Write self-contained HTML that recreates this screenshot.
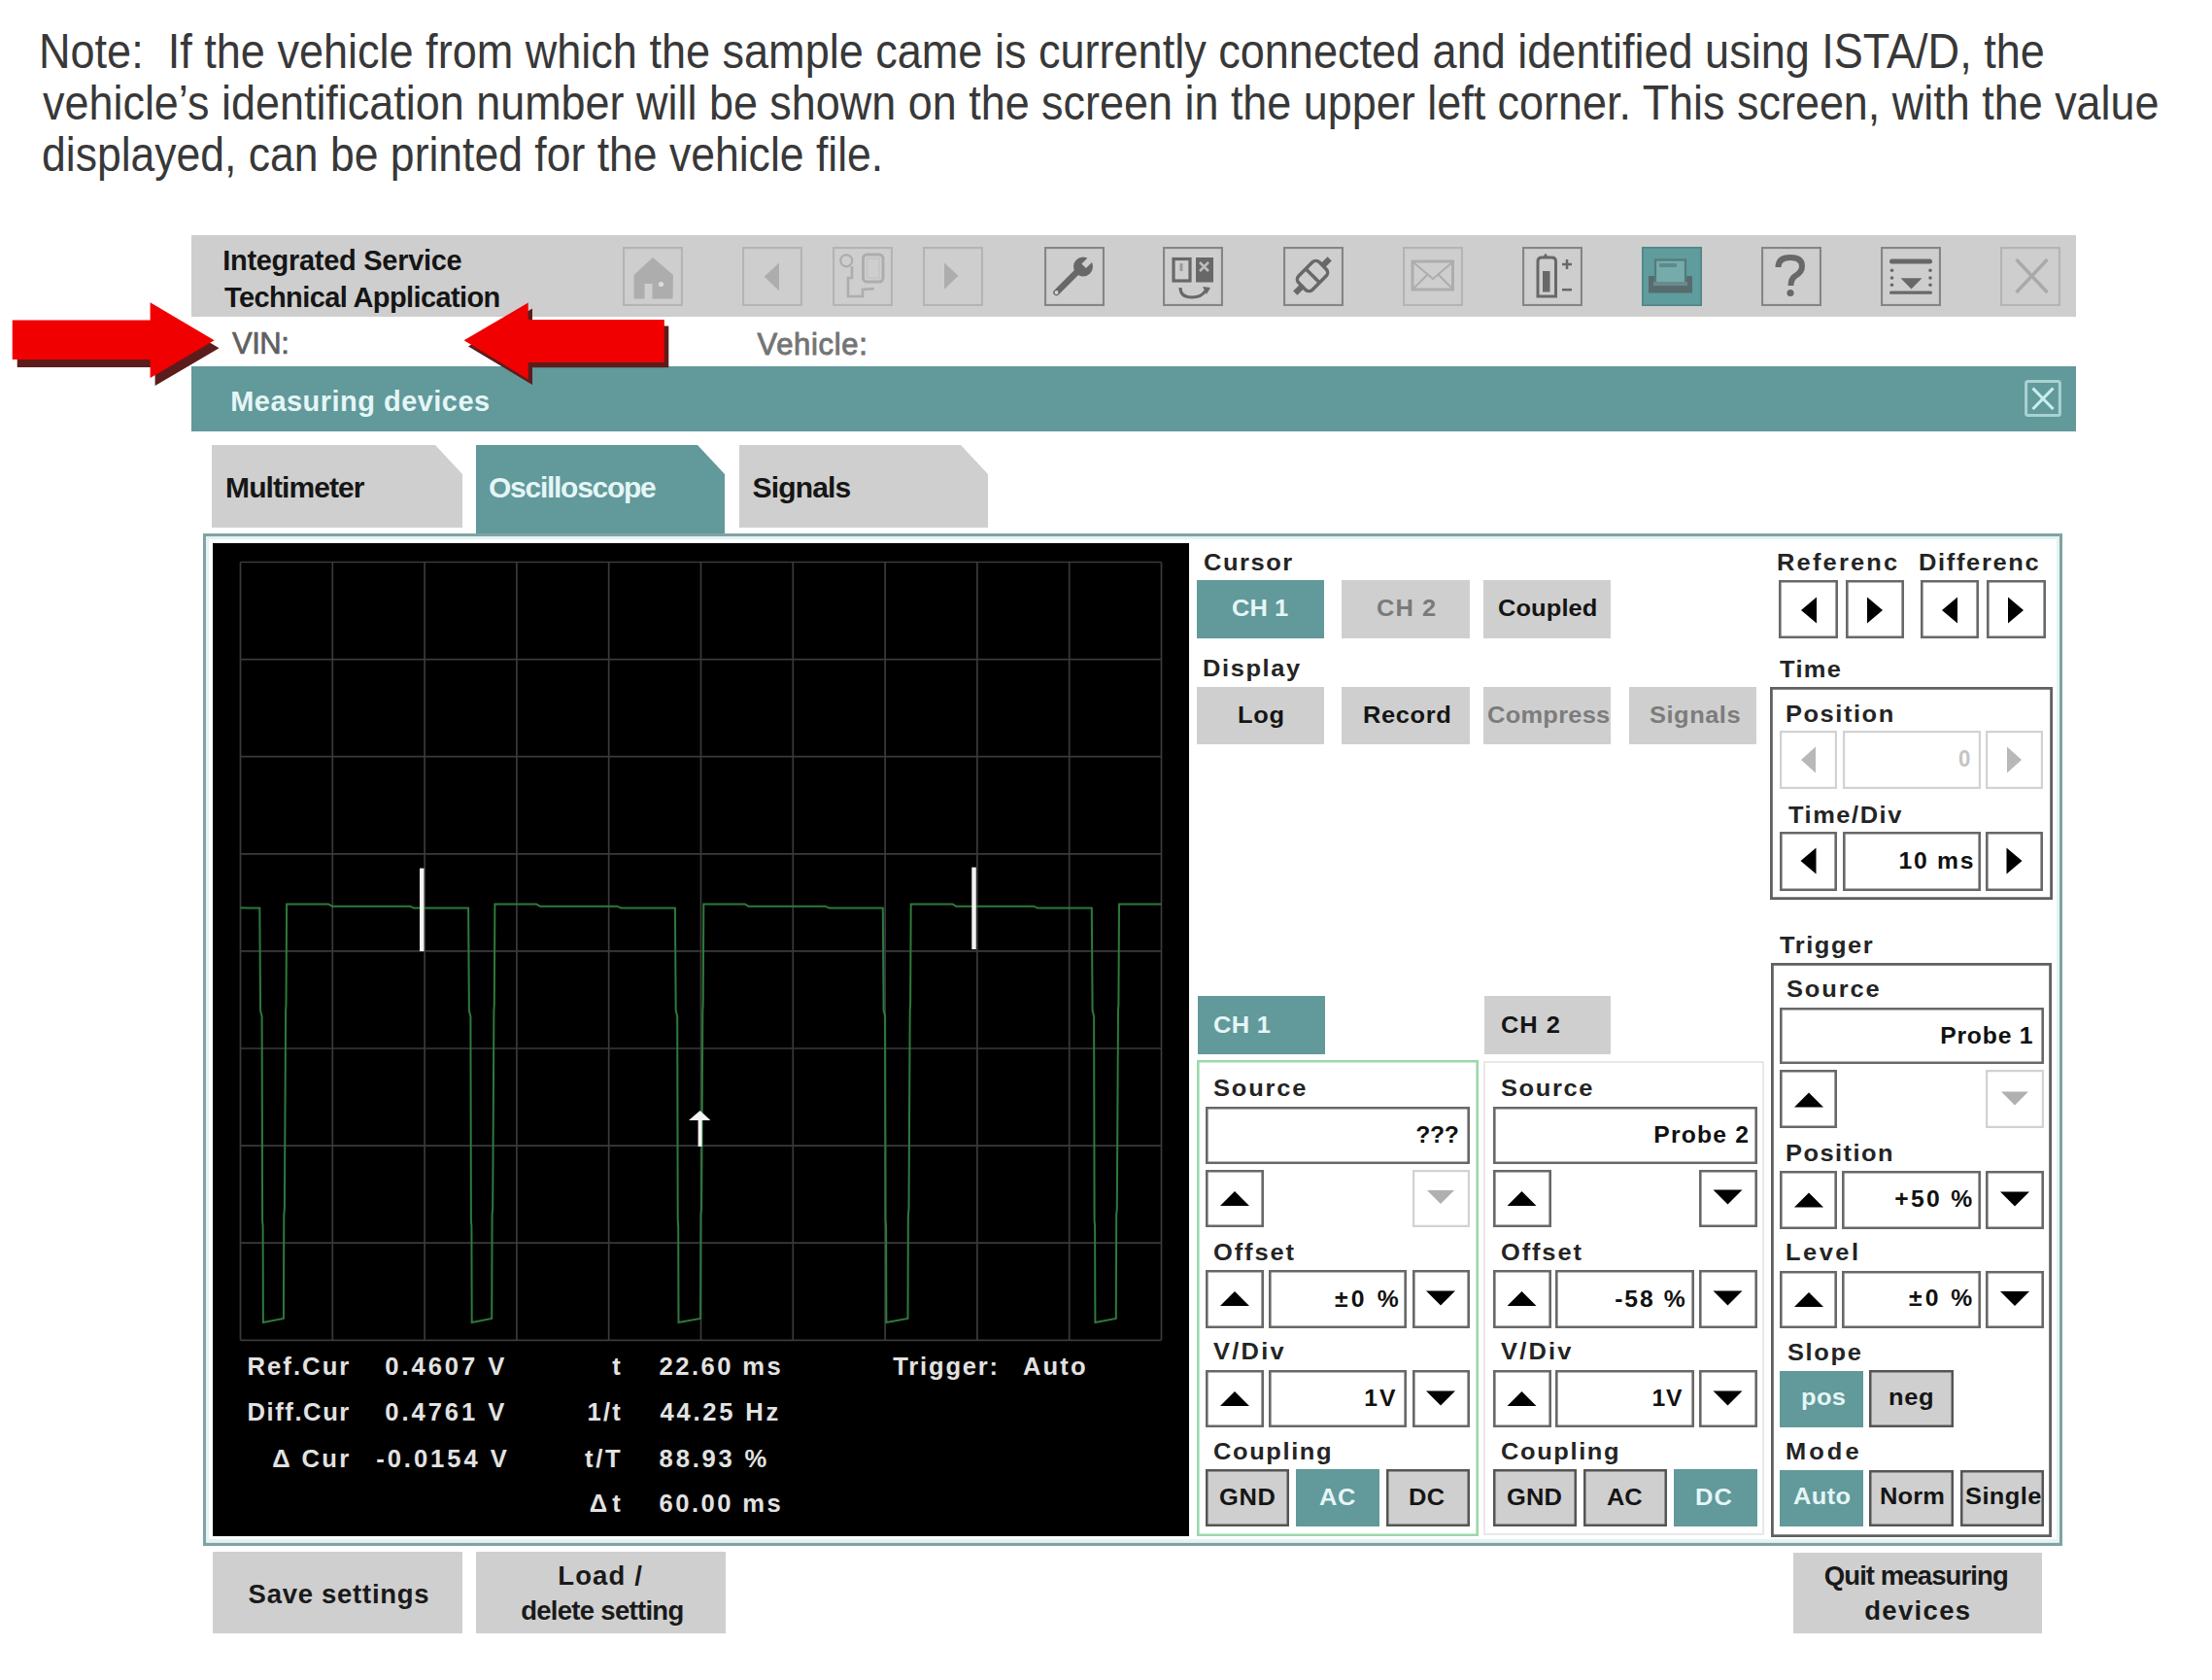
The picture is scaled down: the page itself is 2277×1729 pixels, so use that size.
<!DOCTYPE html>
<html><head><meta charset="utf-8"><title>Measuring devices</title>
<style>
html,body{margin:0;padding:0;background:#fff;}
#r{position:relative;width:2277px;height:1729px;overflow:hidden;background:#fff;font-family:"Liberation Sans",sans-serif;}
.a{position:absolute;}
.t{position:absolute;white-space:pre;font-family:"Liberation Sans",sans-serif;}
</style></head><body><div id="r">
<div class="t" style="left:40.48px;top:27.55px;font-size:49.20px;line-height:49.20px;font-weight:normal;color:#383838;transform:scaleX(0.9158);transform-origin:0 0;">Note:  If the vehicle from which the sample came is currently connected and identified using ISTA/D, the</div>
<div class="t" style="left:44.00px;top:80.55px;font-size:49.20px;line-height:49.20px;font-weight:normal;color:#383838;transform:scaleX(0.9134);transform-origin:0 0;">vehicle’s identification number will be shown on the screen in the upper left corner. This screen, with the value</div>
<div class="t" style="left:42.61px;top:133.55px;font-size:49.20px;line-height:49.20px;font-weight:normal;color:#383838;transform:scaleX(0.9051);transform-origin:0 0;">displayed, can be printed for the vehicle file.</div>
<div class="a" style="left:197.0px;top:242.0px;width:1940.0px;height:84.0px;background:#cecece;"></div>
<div class="t" style="left:229.19px;top:254.45px;font-size:29.00px;line-height:29.00px;font-weight:bold;color:#151515;letter-spacing:-0.289px;">Integrated Service</div>
<div class="t" style="left:231.00px;top:292.45px;font-size:29.00px;line-height:29.00px;font-weight:bold;color:#151515;letter-spacing:-0.608px;">Technical Application</div>
<svg class="a" style="left:641.0px;top:253.5px;" width="62" height="61" viewBox="0 0 62 61"><rect x="1" y="1" width="60" height="59" fill="none" stroke="#b4b4b4" stroke-width="2.2"/><path d="M31 11 L52 29 L51.5 53.5 L11.5 53.5 L11.5 29 Z" fill="#adadad"/><rect x="22.5" y="38" width="8" height="16" fill="#cecece"/><circle cx="39.5" cy="38.5" r="2.6" fill="#dcdcdc"/></svg>
<svg class="a" style="left:764.0px;top:253.5px;" width="62" height="61" viewBox="0 0 62 61"><rect x="1" y="1" width="60" height="59" fill="none" stroke="#b4b4b4" stroke-width="2.2"/><path d="M22.6 30.8 L38 16.4 L38 45.3 Z" fill="#adadad"/></svg>
<svg class="a" style="left:857.0px;top:253.5px;" width="62" height="61" viewBox="0 0 62 61"><rect x="1" y="1" width="60" height="59" fill="none" stroke="#b4b4b4" stroke-width="2.2"/><circle cx="14.2" cy="14.3" r="6" fill="none" stroke="#adadad" stroke-width="2.2"/><rect x="31.5" y="8" width="20.5" height="28" rx="4" fill="none" stroke="#adadad" stroke-width="3"/><rect x="35.5" y="12" width="12.5" height="20" fill="none" stroke="#c4c4c4" stroke-width="1.5"/><path d="M20 20 L20 32 L16 32 L16 51 L31 51 L31 44 L43 43" fill="none" stroke="#adadad" stroke-width="2.6"/></svg>
<svg class="a" style="left:950.0px;top:253.5px;" width="62" height="61" viewBox="0 0 62 61"><rect x="1" y="1" width="60" height="59" fill="none" stroke="#b4b4b4" stroke-width="2.2"/><path d="M22 16.6 L36.5 29.7 L22 43.7 Z" fill="#adadad"/></svg>
<svg class="a" style="left:1075.0px;top:253.5px;" width="62" height="61" viewBox="0 0 62 61"><rect x="1" y="1" width="60" height="59" fill="none" stroke="#858585" stroke-width="2.2"/><path d="M12.5 47 L35 24.5" stroke="#686868" stroke-width="6.5" stroke-linecap="round"/><circle cx="40" cy="20.5" r="10" fill="#686868"/><path d="M42.96 22.06 L38.44 17.54 L47.64 8.34 L52.16 12.86 Z" fill="#cecece"/><circle cx="12.5" cy="47" r="1.9" fill="#d6d6d6"/></svg>
<svg class="a" style="left:1197.0px;top:253.5px;" width="62" height="61" viewBox="0 0 62 61"><rect x="1" y="1" width="60" height="59" fill="none" stroke="#858585" stroke-width="2.2"/><rect x="11" y="12.5" width="17" height="22.5" fill="none" stroke="#686868" stroke-width="3.2"/><rect x="17.5" y="17" width="3" height="8" fill="#9a9a9a"/><rect x="34" y="11" width="18" height="25.5" fill="#686868"/><path d="M38 16 L47 25 M47 16 L38 25" stroke="#bdbdbd" stroke-width="2.5"/><path d="M18 42 Q18 52 30 52 Q40 52 44 45" fill="none" stroke="#686868" stroke-width="3"/><path d="M41 41 L49 42 L45 49 Z" fill="#686868"/></svg>
<svg class="a" style="left:1321.0px;top:253.5px;" width="62" height="61" viewBox="0 0 62 61"><rect x="1" y="1" width="60" height="59" fill="none" stroke="#858585" stroke-width="2.2"/><g transform="rotate(-45 30 30)"><rect x="15" y="20" width="30" height="20" rx="5" fill="none" stroke="#686868" stroke-width="3.5"/><rect x="28.5" y="19" width="3.5" height="22" fill="#686868"/><rect x="5" y="27" width="10" height="6" fill="#686868"/><rect x="45" y="27" width="10" height="6" fill="#686868"/></g></svg>
<svg class="a" style="left:1444.0px;top:253.5px;" width="62" height="61" viewBox="0 0 62 61"><rect x="1" y="1" width="60" height="59" fill="none" stroke="#b4b4b4" stroke-width="2.2"/><rect x="10" y="15" width="41.5" height="29" fill="none" stroke="#adadad" stroke-width="3"/><path d="M11 16 L31 33 L51 16 M11 43 L25 29 M51 43 L37 29" fill="none" stroke="#adadad" stroke-width="2"/></svg>
<svg class="a" style="left:1567.0px;top:253.5px;" width="62" height="61" viewBox="0 0 62 61"><rect x="1" y="1" width="60" height="59" fill="none" stroke="#858585" stroke-width="2.2"/><path d="M16 51 L16 15 Q16 11 20 11 L30.5 11 Q34.5 11 34.5 15 L34.5 51 Z" fill="none" stroke="#686868" stroke-width="3"/><path d="M21 11 L24 6.5 L27 11 Z" fill="#686868"/><rect x="21" y="25" width="7.5" height="21.5" fill="#686868"/><path d="M41 18 L51 18 M46 13 L46 23" stroke="#686868" stroke-width="2.5"/><path d="M41 44.2 L51 44.2" stroke="#686868" stroke-width="2.5"/></svg>
<svg class="a" style="left:1690px;top:253.5px" width="62" height="61" viewBox="0 0 62 61"><rect x="0" y="0" width="62" height="61" fill="#5f9c9d"/><rect x="0.8" y="0.8" width="60.4" height="59.4" fill="none" stroke="#4f8586" stroke-width="1.6"/><rect x="7" y="30" width="45" height="17.5" fill="#566c6e"/><rect x="14" y="13.5" width="31" height="25" fill="#76abab" stroke="#56797a" stroke-width="2.2"/><rect x="18" y="17" width="18" height="4" fill="#5a8c8c"/><rect x="12" y="36" width="35" height="4" fill="#6c8a8b"/></svg>
<svg class="a" style="left:1813.0px;top:253.5px;" width="62" height="61" viewBox="0 0 62 61"><rect x="1" y="1" width="60" height="59" fill="none" stroke="#858585" stroke-width="2.2"/><path d="M17.5 21 Q17.5 11 30 11 Q42 11 42 20 Q42 26 35 30 Q30.5 33 30.5 40" fill="none" stroke="#686868" stroke-width="6"/><circle cx="30" cy="47.5" r="3.6" fill="#686868"/></svg>
<svg class="a" style="left:1936.0px;top:253.5px;" width="62" height="61" viewBox="0 0 62 61"><rect x="1" y="1" width="60" height="59" fill="none" stroke="#858585" stroke-width="2.2"/><rect x="9" y="12.5" width="44" height="5" rx="2.5" fill="#686868"/><rect x="9" y="45.5" width="44" height="3.2" rx="1.5" fill="#686868"/><circle cx="11.5" cy="24.3" r="1.8" fill="#686868"/><circle cx="11.5" cy="32" r="1.8" fill="#686868"/><circle cx="11.5" cy="39.2" r="1.8" fill="#686868"/><circle cx="51" cy="24.3" r="1.8" fill="#686868"/><circle cx="51" cy="32" r="1.8" fill="#686868"/><circle cx="51" cy="39.2" r="1.8" fill="#686868"/><path d="M20.5 32.3 L42.5 32.3 L31.5 43.5 Z" fill="#686868"/></svg>
<svg class="a" style="left:2059.0px;top:253.5px;" width="62" height="61" viewBox="0 0 62 61"><rect x="1" y="1" width="60" height="59" fill="none" stroke="#b4b4b4" stroke-width="2.2"/><path d="M16.5 13 L48.5 47 M48.5 13 L16.5 47" stroke="#a9a9a9" stroke-width="3.4"/></svg>
<div class="t" style="left:239.00px;top:338.26px;font-size:31.00px;line-height:31.00px;font-weight:normal;color:#606060;letter-spacing:-0.496px;-webkit-text-stroke:0.7px #606060;">VIN:</div>
<div class="t" style="left:779.50px;top:338.76px;font-size:31.00px;line-height:31.00px;font-weight:normal;color:#747474;letter-spacing:0.675px;-webkit-text-stroke:0.9px #747474;">Vehicle:</div>
<div class="a" style="left:197.0px;top:377.0px;width:1940.0px;height:67.0px;background:#62999a;"></div>
<div class="t" style="left:237.19px;top:398.95px;font-size:29.00px;line-height:29.00px;font-weight:bold;color:#e4f6f6;letter-spacing:0.468px;">Measuring devices</div>
<svg class="a" style="left:2084px;top:390.5px" width="38" height="38" viewBox="0 0 38 38"><rect x="1.6" y="1.6" width="34.8" height="34.8" rx="2" fill="none" stroke="#a9d2d2" stroke-width="3"/><path d="M8.5 8.5 L29.5 30 M29.5 8.5 L8.5 30" stroke="#c9eeee" stroke-width="3.2"/></svg>
<svg class="a" style="left:0;top:290px" width="700" height="120" viewBox="0 290 700 120"><path d="M17.7 337.4 L159.6 337.4 L159.6 319.3 L225.6 358.2 L159.6 397 L159.6 378.1 L17.7 378.1 Z" fill="#5c1c1c"/><path d="M12.7 329.4 L154.6 329.4 L154.6 311.3 L220.6 350.2 L154.6 389 L154.6 370.1 L12.7 370.1 Z" fill="#f00000"/><path d="M482 356.5 L548 317.5 L548 335.5 L688.3 335.5 L688.3 378.3 L548 378.3 L548 396 Z" fill="#5c1c1c"/><path d="M477.6 350.3 L543.7 311.4 L543.7 329.1 L683.8 329.1 L683.8 372.9 L543.7 372.9 L543.7 390.5 Z" fill="#f00000"/></svg>
<svg class="a" style="left:218px;top:458px" width="258" height="85" viewBox="0 0 258 85"><path d="M0 0 L230 0 L258 30 L258 85 L0 85 Z" fill="#cfcfcf"/></svg>
<svg class="a" style="left:490px;top:458px" width="256" height="93" viewBox="0 0 256 93"><path d="M0 0 L228 0 L256 30 L256 93 L0 93 Z" fill="#62999a"/></svg>
<svg class="a" style="left:761px;top:458px" width="256" height="85" viewBox="0 0 256 85"><path d="M0 0 L228 0 L256 30 L256 85 L0 85 Z" fill="#cfcfcf"/></svg>
<div class="t" style="left:232.12px;top:487.11px;font-size:30.00px;line-height:30.00px;font-weight:bold;color:#161616;letter-spacing:-0.932px;">Multimeter</div>
<div class="t" style="left:503.06px;top:487.11px;font-size:30.00px;line-height:30.00px;font-weight:bold;color:#e4f6f6;letter-spacing:-1.278px;">Oscilloscope</div>
<div class="t" style="left:774.53px;top:487.11px;font-size:30.00px;line-height:30.00px;font-weight:bold;color:#161616;letter-spacing:-0.836px;">Signals</div>
<div class="a" style="left:209.0px;top:549.0px;width:1914.0px;height:1041.5px;box-shadow:inset 0 0 0 3.2px #80a3a3;"></div>
<div class="a" style="left:212.2px;top:552.2px;width:1907.6px;height:1035.1px;box-shadow:inset 0 0 0 3px #e4f3f3;"></div>
<div class="a" style="left:218.5px;top:559.0px;width:1005.5px;height:1022.0px;background:#000;"></div>
<svg class="a" style="left:0.0px;top:0.0px;" width="1240" height="1600" viewBox="0 0 1240 1600"><g stroke="#3a3a3a" stroke-width="1.7" fill="none"><path d="M247.5 578.5 L247.5 1379.3"/><path d="M342.3 578.5 L342.3 1379.3"/><path d="M437.1 578.5 L437.1 1379.3"/><path d="M531.9 578.5 L531.9 1379.3"/><path d="M626.7 578.5 L626.7 1379.3"/><path d="M721.5 578.5 L721.5 1379.3"/><path d="M816.3 578.5 L816.3 1379.3"/><path d="M911.1 578.5 L911.1 1379.3"/><path d="M1005.9 578.5 L1005.9 1379.3"/><path d="M1100.7 578.5 L1100.7 1379.3"/><path d="M1195.5 578.5 L1195.5 1379.3"/><path d="M247.5 578.5 L1195.5 578.5"/><path d="M247.5 678.6 L1195.5 678.6"/><path d="M247.5 778.7 L1195.5 778.7"/><path d="M247.5 878.8 L1195.5 878.8"/><path d="M247.5 978.9 L1195.5 978.9"/><path d="M247.5 1079.0 L1195.5 1079.0"/><path d="M247.5 1179.1 L1195.5 1179.1"/><path d="M247.5 1279.2 L1195.5 1279.2"/><path d="M247.5 1379.3 L1195.5 1379.3"/></g><polyline points="247.5,934.3 267.3,934.6 268.1,1040.0 269.6,1046.0 270.1,1256.0 270.6,1262.0 270.9,1361.0 291.9,1357.0 292.3,1250.0 292.9,1244.0 294.1,1040.0 294.5,1034.0 295.1,930.5 338.1,930.5 341.9,932.7 422.3,932.7 426.0,934.6 482.1,934.6 482.9,1040.0 484.4,1046.0 484.9,1256.0 485.4,1262.0 485.7,1361.0 506.2,1357.0 506.6,1250.0 507.2,1244.0 508.4,1040.0 508.8,1034.0 509.4,930.5 552.1,930.5 555.8,932.7 635.5,932.7 639.2,934.6 694.9,934.6 695.7,1040.0 697.2,1046.0 697.7,1256.0 698.2,1262.0 698.5,1361.0 721.1,1357.0 721.5,1250.0 722.1,1244.0 723.3,1040.0 723.7,1034.0 724.3,930.5 766.7,930.5 770.4,932.7 849.8,932.7 853.4,934.6 908.8,934.6 909.6,1040.0 911.1,1046.0 911.6,1256.0 912.1,1262.0 912.4,1361.0 934.5,1357.0 934.9,1250.0 935.5,1244.0 936.7,1040.0 937.1,1034.0 937.7,930.5 980.5,930.5 984.2,932.7 1064.2,932.7 1068.0,934.6 1123.8,934.6 1124.6,1040.0 1126.1,1046.0 1126.6,1256.0 1127.1,1262.0 1127.4,1361.0 1148.8,1357.0 1149.2,1250.0 1149.8,1244.0 1151.0,1040.0 1151.4,1034.0 1152.0,930.5 1195.5,930.5" fill="none" stroke="#2d7a3a" stroke-width="2.0"/><rect x="432" y="893.6" width="4.5" height="85.4" fill="#f2f2f2"/><rect x="1000.3" y="892.6" width="4.5" height="84.4" fill="#f2f2f2"/><path d="M709 1153 L720.6 1143 L731.4 1153 Z" fill="#f4f4f4"/><rect x="718.6" y="1150" width="4" height="30" fill="#f4f4f4"/></svg>
<div class="t" style="left:254.40px;top:1393.73px;font-size:25.60px;line-height:25.60px;font-weight:bold;color:#e2e2e2;letter-spacing:2.085px;">Ref.Cur</div>
<div class="t" style="left:396.20px;top:1393.73px;font-size:25.60px;line-height:25.60px;font-weight:bold;color:#e2e2e2;letter-spacing:2.955px;">0.4607 V</div>
<div class="t" style="left:254.40px;top:1441.23px;font-size:25.60px;line-height:25.60px;font-weight:bold;color:#e2e2e2;letter-spacing:1.587px;">Diff.Cur</div>
<div class="t" style="left:396.20px;top:1441.23px;font-size:25.60px;line-height:25.60px;font-weight:bold;color:#e2e2e2;letter-spacing:2.955px;">0.4761 V</div>
<div class="t" style="left:280.20px;top:1488.63px;font-size:25.60px;line-height:25.60px;font-weight:bold;color:#e2e2e2;letter-spacing:2.391px;">Δ Cur</div>
<div class="t" style="left:387.20px;top:1488.63px;font-size:25.60px;line-height:25.60px;font-weight:bold;color:#e2e2e2;letter-spacing:2.958px;">-0.0154 V</div>
<div class="t" style="left:630.30px;top:1393.73px;font-size:25.60px;line-height:25.60px;font-weight:bold;color:#e2e2e2;">t</div>
<div class="t" style="left:604.40px;top:1441.23px;font-size:25.60px;line-height:25.60px;font-weight:bold;color:#e2e2e2;letter-spacing:2.275px;">1/t</div>
<div class="t" style="left:602.00px;top:1488.63px;font-size:25.60px;line-height:25.60px;font-weight:bold;color:#e2e2e2;letter-spacing:2.731px;">t/T</div>
<div class="t" style="left:606.70px;top:1534.73px;font-size:25.60px;line-height:25.60px;font-weight:bold;color:#e2e2e2;letter-spacing:5.200px;">Δt</div>
<div class="t" style="left:678.60px;top:1393.73px;font-size:25.60px;line-height:25.60px;font-weight:bold;color:#e2e2e2;letter-spacing:2.437px;">22.60 ms</div>
<div class="t" style="left:679.40px;top:1441.23px;font-size:25.60px;line-height:25.60px;font-weight:bold;color:#e2e2e2;letter-spacing:2.777px;">44.25 Hz</div>
<div class="t" style="left:678.60px;top:1488.63px;font-size:25.60px;line-height:25.60px;font-weight:bold;color:#e2e2e2;letter-spacing:2.804px;">88.93 %</div>
<div class="t" style="left:678.60px;top:1534.73px;font-size:25.60px;line-height:25.60px;font-weight:bold;color:#e2e2e2;letter-spacing:2.437px;">60.00 ms</div>
<div class="t" style="left:919.30px;top:1393.73px;font-size:25.60px;line-height:25.60px;font-weight:bold;color:#e2e2e2;letter-spacing:1.789px;">Trigger:</div>
<div class="t" style="left:1052.90px;top:1393.73px;font-size:25.60px;line-height:25.60px;font-weight:bold;color:#e2e2e2;letter-spacing:2.150px;">Auto</div>
<div class="t" style="left:1239.20px;top:567.09px;font-size:24.70px;line-height:24.70px;font-weight:bold;color:#242424;letter-spacing:1.505px;transform:scaleX(1.0300);transform-origin:0 0;">Cursor</div>
<div class="a" style="left:1232.0px;top:597.0px;width:131.0px;height:60.0px;background:#62999a;"></div>
<div class="t" style="left:1268.20px;top:614.09px;font-size:24.70px;line-height:24.70px;font-weight:bold;color:#e4f6f6;letter-spacing:0.086px;transform:scaleX(1.0300);transform-origin:0 0;">CH 1</div>
<div class="a" style="left:1381.0px;top:597.0px;width:132.0px;height:60.0px;background:#cfcfcf;"></div>
<div class="t" style="left:1417.20px;top:614.09px;font-size:24.70px;line-height:24.70px;font-weight:bold;color:#7a7a7a;letter-spacing:1.025px;transform:scaleX(1.0300);transform-origin:0 0;">CH 2</div>
<div class="a" style="left:1527.0px;top:597.0px;width:131.0px;height:60.0px;background:#cfcfcf;"></div>
<div class="t" style="left:1542.20px;top:614.09px;font-size:24.70px;line-height:24.70px;font-weight:bold;color:#151515;letter-spacing:0.109px;transform:scaleX(1.0300);transform-origin:0 0;">Coupled</div>
<div class="t" style="left:1238.41px;top:676.39px;font-size:24.70px;line-height:24.70px;font-weight:bold;color:#242424;letter-spacing:1.559px;transform:scaleX(1.0300);transform-origin:0 0;">Display</div>
<div class="a" style="left:1232.0px;top:707.0px;width:131.0px;height:59.0px;background:#cfcfcf;"></div>
<div class="t" style="left:1274.01px;top:724.09px;font-size:24.70px;line-height:24.70px;font-weight:bold;color:#151515;letter-spacing:0.678px;transform:scaleX(1.0300);transform-origin:0 0;">Log</div>
<div class="a" style="left:1381.0px;top:707.0px;width:132.0px;height:59.0px;background:#cfcfcf;"></div>
<div class="t" style="left:1402.91px;top:724.09px;font-size:24.70px;line-height:24.70px;font-weight:bold;color:#151515;letter-spacing:0.595px;transform:scaleX(1.0300);transform-origin:0 0;">Record</div>
<div class="a" style="left:1527.0px;top:707.0px;width:131.0px;height:59.0px;background:#cfcfcf;"></div>
<div class="t" style="left:1530.70px;top:724.09px;font-size:24.70px;line-height:24.70px;font-weight:bold;color:#7c7c7c;letter-spacing:0.264px;transform:scaleX(1.0300);transform-origin:0 0;">Compress</div>
<div class="a" style="left:1677.0px;top:707.0px;width:131.0px;height:59.0px;background:#cfcfcf;"></div>
<div class="t" style="left:1697.90px;top:724.09px;font-size:24.70px;line-height:24.70px;font-weight:bold;color:#7c7c7c;letter-spacing:0.509px;transform:scaleX(1.0300);transform-origin:0 0;">Signals</div>
<div class="t" style="left:1829.41px;top:566.89px;font-size:24.70px;line-height:24.70px;font-weight:bold;color:#242424;letter-spacing:2.128px;transform:scaleX(1.0300);transform-origin:0 0;">Referenc</div>
<div class="t" style="left:1975.41px;top:566.89px;font-size:24.70px;line-height:24.70px;font-weight:bold;color:#242424;letter-spacing:1.632px;transform:scaleX(1.0300);transform-origin:0 0;">Differenc</div>
<div class="a" style="left:1831.0px;top:596.5px;width:61.0px;height:60.5px;background:#fff;box-shadow:inset 0 0 0 2.6px #686868;"></div>
<div class="a" style="left:1900.0px;top:596.5px;width:60.0px;height:60.5px;background:#fff;box-shadow:inset 0 0 0 2.6px #686868;"></div>
<div class="a" style="left:1977.0px;top:596.5px;width:60.0px;height:60.5px;background:#fff;box-shadow:inset 0 0 0 2.6px #686868;"></div>
<div class="a" style="left:2045.0px;top:596.5px;width:61.0px;height:60.5px;background:#fff;box-shadow:inset 0 0 0 2.6px #686868;"></div>
<div class="t" style="left:1832.30px;top:676.79px;font-size:24.70px;line-height:24.70px;font-weight:bold;color:#242424;letter-spacing:1.267px;transform:scaleX(1.0300);transform-origin:0 0;">Time</div>
<div class="a" style="left:1822.0px;top:706.5px;width:291.0px;height:219.5px;background:#fff;box-shadow:inset 0 0 0 2.8px #606060;"></div>
<div class="t" style="left:1838.01px;top:722.79px;font-size:24.70px;line-height:24.70px;font-weight:bold;color:#242424;letter-spacing:1.508px;transform:scaleX(1.0300);transform-origin:0 0;">Position</div>
<div class="a" style="left:1832.0px;top:752.0px;width:59.0px;height:59.5px;background:#fff;box-shadow:inset 0 0 0 2.2px #d2d2d2;"></div>
<div class="a" style="left:1897.0px;top:752.0px;width:142.0px;height:59.5px;background:#fff;box-shadow:inset 0 0 0 2.2px #d2d2d2;"></div>
<div class="a" style="left:2044.0px;top:752.0px;width:59.0px;height:59.5px;background:#fff;box-shadow:inset 0 0 0 2.2px #d2d2d2;"></div>
<div class="t" style="left:2015.54px;top:769.09px;font-size:24.70px;line-height:24.70px;font-weight:bold;color:#c4c4c4;transform:scaleX(0.9000);transform-origin:0 0;">0</div>
<div class="t" style="left:1841.00px;top:826.89px;font-size:24.70px;line-height:24.70px;font-weight:bold;color:#242424;letter-spacing:1.492px;transform:scaleX(1.0300);transform-origin:0 0;">Time/Div</div>
<div class="a" style="left:1832.0px;top:856.0px;width:59.0px;height:60.5px;background:#fff;box-shadow:inset 0 0 0 2.6px #686868;"></div>
<div class="a" style="left:1897.0px;top:856.0px;width:142.0px;height:60.5px;background:#fff;box-shadow:inset 0 0 0 2.6px #686868;"></div>
<div class="a" style="left:2044.0px;top:856.0px;width:59.0px;height:60.5px;background:#fff;box-shadow:inset 0 0 0 2.6px #686868;"></div>
<div class="t" style="left:1954.46px;top:874.09px;font-size:24.70px;line-height:24.70px;font-weight:bold;color:#111;letter-spacing:1.777px;">10 ms</div>
<div class="t" style="left:1832.40px;top:961.09px;font-size:24.70px;line-height:24.70px;font-weight:bold;color:#242424;letter-spacing:1.541px;transform:scaleX(1.0300);transform-origin:0 0;">Trigger</div>
<div class="a" style="left:1823.0px;top:991.0px;width:289.0px;height:590.5px;background:#fff;box-shadow:inset 0 0 0 2.8px #606060;"></div>
<div class="t" style="left:1839.20px;top:1006.09px;font-size:24.70px;line-height:24.70px;font-weight:bold;color:#242424;letter-spacing:1.841px;transform:scaleX(1.0300);transform-origin:0 0;">Source</div>
<div class="a" style="left:1832.0px;top:1037.0px;width:272.0px;height:58.0px;background:#fff;box-shadow:inset 0 0 0 2.6px #686868;"></div>
<div class="t" style="left:1997.16px;top:1053.79px;font-size:24.70px;line-height:24.70px;font-weight:bold;color:#111;letter-spacing:0.810px;">Probe 1</div>
<div class="a" style="left:1832.0px;top:1101.0px;width:59.0px;height:59.5px;background:#fff;box-shadow:inset 0 0 0 2.6px #686868;"></div>
<div class="a" style="left:2044.0px;top:1101.0px;width:60.0px;height:59.5px;background:#fff;box-shadow:inset 0 0 0 2.2px #d2d2d2;"></div>
<div class="t" style="left:1838.01px;top:1175.39px;font-size:24.70px;line-height:24.70px;font-weight:bold;color:#242424;letter-spacing:1.425px;transform:scaleX(1.0300);transform-origin:0 0;">Position</div>
<div class="a" style="left:1832.0px;top:1205.0px;width:59.0px;height:60.0px;background:#fff;box-shadow:inset 0 0 0 2.6px #686868;"></div>
<div class="a" style="left:1896.0px;top:1205.0px;width:143.0px;height:60.0px;background:#fff;box-shadow:inset 0 0 0 2.6px #686868;"></div>
<div class="a" style="left:2044.0px;top:1205.0px;width:60.0px;height:60.0px;background:#fff;box-shadow:inset 0 0 0 2.6px #686868;"></div>
<div class="t" style="left:1950.23px;top:1222.09px;font-size:24.70px;line-height:24.70px;font-weight:bold;color:#111;letter-spacing:2.300px;">+50 %</div>
<div class="t" style="left:1838.41px;top:1277.39px;font-size:24.70px;line-height:24.70px;font-weight:bold;color:#242424;letter-spacing:2.436px;transform:scaleX(1.0300);transform-origin:0 0;">Level</div>
<div class="a" style="left:1832.0px;top:1307.5px;width:59.0px;height:59.5px;background:#fff;box-shadow:inset 0 0 0 2.6px #686868;"></div>
<div class="a" style="left:1896.0px;top:1307.5px;width:143.0px;height:59.5px;background:#fff;box-shadow:inset 0 0 0 2.6px #686868;"></div>
<div class="a" style="left:2044.0px;top:1307.5px;width:60.0px;height:59.5px;background:#fff;box-shadow:inset 0 0 0 2.6px #686868;"></div>
<div class="t" style="left:1965.11px;top:1324.09px;font-size:24.70px;line-height:24.70px;font-weight:bold;color:#111;letter-spacing:2.973px;">±0 %</div>
<div class="t" style="left:1839.60px;top:1380.09px;font-size:24.70px;line-height:24.70px;font-weight:bold;color:#242424;letter-spacing:1.593px;transform:scaleX(1.0300);transform-origin:0 0;">Slope</div>
<div class="a" style="left:1832.0px;top:1410.5px;width:86.0px;height:58.5px;background:#62999a;"></div>
<div class="t" style="left:1853.91px;top:1426.09px;font-size:24.70px;line-height:24.70px;font-weight:bold;color:#e4f6f6;letter-spacing:0.384px;transform:scaleX(1.0300);transform-origin:0 0;">pos</div>
<div class="a" style="left:1924.0px;top:1410.0px;width:87.0px;height:59.0px;background:#cfcfcf;box-shadow:inset 0 0 0 2.5px #555;"></div>
<div class="t" style="left:1944.41px;top:1426.09px;font-size:24.70px;line-height:24.70px;font-weight:bold;color:#151515;letter-spacing:0.625px;transform:scaleX(1.0300);transform-origin:0 0;">neg</div>
<div class="t" style="left:1838.41px;top:1481.69px;font-size:24.70px;line-height:24.70px;font-weight:bold;color:#242424;letter-spacing:2.978px;transform:scaleX(1.0300);transform-origin:0 0;">Mode</div>
<div class="a" style="left:1832.0px;top:1512.5px;width:86.0px;height:58.5px;background:#62999a;"></div>
<div class="t" style="left:1845.70px;top:1528.09px;font-size:24.70px;line-height:24.70px;font-weight:bold;color:#e4f6f6;letter-spacing:0.390px;transform:scaleX(1.0300);transform-origin:0 0;">Auto</div>
<div class="a" style="left:1924.0px;top:1512.5px;width:87.0px;height:58.5px;background:#cfcfcf;box-shadow:inset 0 0 0 2.5px #555;"></div>
<div class="t" style="left:1934.91px;top:1528.09px;font-size:24.70px;line-height:24.70px;font-weight:bold;color:#151515;letter-spacing:0.132px;transform:scaleX(1.0300);transform-origin:0 0;">Norm</div>
<div class="a" style="left:2017.5px;top:1512.5px;width:86.5px;height:58.5px;background:#cfcfcf;box-shadow:inset 0 0 0 2.5px #555;"></div>
<div class="t" style="left:2022.90px;top:1528.09px;font-size:24.70px;line-height:24.70px;font-weight:bold;color:#151515;letter-spacing:0.407px;transform:scaleX(1.0300);transform-origin:0 0;">Single</div>
<div class="a" style="left:1232.5px;top:1025.0px;width:131.5px;height:59.5px;background:#62999a;"></div>
<div class="t" style="left:1248.90px;top:1043.09px;font-size:24.70px;line-height:24.70px;font-weight:bold;color:#e4f6f6;letter-spacing:0.280px;transform:scaleX(1.0300);transform-origin:0 0;">CH 1</div>
<div class="a" style="left:1527.5px;top:1024.5px;width:130.5px;height:60.0px;background:#cfcfcf;"></div>
<div class="t" style="left:1544.60px;top:1042.59px;font-size:24.70px;line-height:24.70px;font-weight:bold;color:#151515;letter-spacing:0.927px;transform:scaleX(1.0300);transform-origin:0 0;">CH 2</div>
<div class="a" style="left:1232.0px;top:1091.0px;width:290.0px;height:489.5px;box-shadow:inset 0 0 0 2.6px #9ad8ab;"></div>
<div class="a" style="left:1527.0px;top:1092.0px;width:288.5px;height:488.0px;box-shadow:inset 0 0 0 2px #e8e8e8;"></div>
<div class="t" style="left:1248.90px;top:1108.09px;font-size:24.70px;line-height:24.70px;font-weight:bold;color:#242424;letter-spacing:1.764px;transform:scaleX(1.0300);transform-origin:0 0;">Source</div>
<div class="a" style="left:1241.0px;top:1138.5px;width:272.0px;height:59.5px;background:#fff;box-shadow:inset 0 0 0 2.6px #686868;"></div>
<div class="t" style="left:1457.13px;top:1156.09px;font-size:24.70px;line-height:24.70px;font-weight:bold;color:#111;letter-spacing:-0.249px;">???</div>
<div class="a" style="left:1241.0px;top:1203.5px;width:60.0px;height:59.5px;background:#fff;box-shadow:inset 0 0 0 2.6px #686868;"></div>
<div class="a" style="left:1453.5px;top:1203.5px;width:59.5px;height:59.5px;background:#fff;box-shadow:inset 0 0 0 2.2px #d2d2d2;"></div>
<div class="t" style="left:1248.50px;top:1277.09px;font-size:24.70px;line-height:24.70px;font-weight:bold;color:#242424;letter-spacing:1.848px;transform:scaleX(1.0300);transform-origin:0 0;">Offset</div>
<div class="a" style="left:1241.0px;top:1307.0px;width:60.0px;height:59.5px;background:#fff;box-shadow:inset 0 0 0 2.6px #686868;"></div>
<div class="a" style="left:1305.5px;top:1307.0px;width:142.5px;height:59.5px;background:#fff;box-shadow:inset 0 0 0 2.6px #686868;"></div>
<div class="a" style="left:1453.5px;top:1307.0px;width:59.5px;height:59.5px;background:#fff;box-shadow:inset 0 0 0 2.6px #686868;"></div>
<div class="t" style="left:1373.91px;top:1324.59px;font-size:24.70px;line-height:24.70px;font-weight:bold;color:#111;letter-spacing:3.206px;">±0 %</div>
<div class="t" style="left:1249.30px;top:1379.39px;font-size:24.70px;line-height:24.70px;font-weight:bold;color:#242424;letter-spacing:2.187px;transform:scaleX(1.0300);transform-origin:0 0;">V/Div</div>
<div class="a" style="left:1241.0px;top:1410.0px;width:60.0px;height:59.0px;background:#fff;box-shadow:inset 0 0 0 2.6px #686868;"></div>
<div class="a" style="left:1305.5px;top:1410.0px;width:142.5px;height:59.0px;background:#fff;box-shadow:inset 0 0 0 2.6px #686868;"></div>
<div class="a" style="left:1453.5px;top:1410.0px;width:59.5px;height:59.0px;background:#fff;box-shadow:inset 0 0 0 2.6px #686868;"></div>
<div class="t" style="left:1404.16px;top:1427.09px;font-size:24.70px;line-height:24.70px;font-weight:bold;color:#111;letter-spacing:2.011px;">1V</div>
<div class="t" style="left:1248.60px;top:1481.69px;font-size:24.70px;line-height:24.70px;font-weight:bold;color:#242424;letter-spacing:1.583px;transform:scaleX(1.0300);transform-origin:0 0;">Coupling</div>
<div class="a" style="left:1241.0px;top:1512.0px;width:86.0px;height:59.0px;background:#cfcfcf;box-shadow:inset 0 0 0 2.5px #555;"></div>
<div class="t" style="left:1254.90px;top:1528.59px;font-size:24.70px;line-height:24.70px;font-weight:bold;color:#151515;letter-spacing:0.603px;transform:scaleX(1.0300);transform-origin:0 0;">GND</div>
<div class="a" style="left:1334.0px;top:1512.0px;width:86.0px;height:59.0px;background:#62999a;"></div>
<div class="t" style="left:1357.60px;top:1528.59px;font-size:24.70px;line-height:24.70px;font-weight:bold;color:#e4f6f6;letter-spacing:0.618px;transform:scaleX(1.0300);transform-origin:0 0;">AC</div>
<div class="a" style="left:1427.0px;top:1512.0px;width:86.0px;height:59.0px;background:#cfcfcf;box-shadow:inset 0 0 0 2.5px #555;"></div>
<div class="t" style="left:1450.41px;top:1528.59px;font-size:24.70px;line-height:24.70px;font-weight:bold;color:#151515;letter-spacing:0.320px;transform:scaleX(1.0300);transform-origin:0 0;">DC</div>
<div class="t" style="left:1545.00px;top:1108.09px;font-size:24.70px;line-height:24.70px;font-weight:bold;color:#242424;letter-spacing:1.589px;transform:scaleX(1.0300);transform-origin:0 0;">Source</div>
<div class="a" style="left:1536.5px;top:1138.5px;width:272.0px;height:59.5px;background:#fff;box-shadow:inset 0 0 0 2.6px #686868;"></div>
<div class="t" style="left:1702.36px;top:1156.09px;font-size:24.70px;line-height:24.70px;font-weight:bold;color:#111;letter-spacing:1.160px;">Probe 2</div>
<div class="a" style="left:1536.5px;top:1203.5px;width:60.0px;height:59.5px;background:#fff;box-shadow:inset 0 0 0 2.6px #686868;"></div>
<div class="a" style="left:1749.0px;top:1203.5px;width:59.5px;height:59.5px;background:#fff;box-shadow:inset 0 0 0 2.6px #686868;"></div>
<div class="t" style="left:1544.60px;top:1277.09px;font-size:24.70px;line-height:24.70px;font-weight:bold;color:#242424;letter-spacing:1.828px;transform:scaleX(1.0300);transform-origin:0 0;">Offset</div>
<div class="a" style="left:1536.5px;top:1307.0px;width:60.0px;height:59.5px;background:#fff;box-shadow:inset 0 0 0 2.6px #686868;"></div>
<div class="a" style="left:1601.0px;top:1307.0px;width:142.5px;height:59.5px;background:#fff;box-shadow:inset 0 0 0 2.6px #686868;"></div>
<div class="a" style="left:1749.0px;top:1307.0px;width:59.5px;height:59.5px;background:#fff;box-shadow:inset 0 0 0 2.6px #686868;"></div>
<div class="t" style="left:1662.13px;top:1324.59px;font-size:24.70px;line-height:24.70px;font-weight:bold;color:#111;letter-spacing:1.999px;">-58 %</div>
<div class="t" style="left:1545.40px;top:1379.39px;font-size:24.70px;line-height:24.70px;font-weight:bold;color:#242424;letter-spacing:2.163px;transform:scaleX(1.0300);transform-origin:0 0;">V/Div</div>
<div class="a" style="left:1536.5px;top:1410.0px;width:60.0px;height:59.0px;background:#fff;box-shadow:inset 0 0 0 2.6px #686868;"></div>
<div class="a" style="left:1601.0px;top:1410.0px;width:142.5px;height:59.0px;background:#fff;box-shadow:inset 0 0 0 2.6px #686868;"></div>
<div class="a" style="left:1749.0px;top:1410.0px;width:59.5px;height:59.0px;background:#fff;box-shadow:inset 0 0 0 2.6px #686868;"></div>
<div class="t" style="left:1700.46px;top:1427.09px;font-size:24.70px;line-height:24.70px;font-weight:bold;color:#111;letter-spacing:0.811px;">1V</div>
<div class="t" style="left:1544.60px;top:1481.69px;font-size:24.70px;line-height:24.70px;font-weight:bold;color:#242424;letter-spacing:1.583px;transform:scaleX(1.0300);transform-origin:0 0;">Coupling</div>
<div class="a" style="left:1536.5px;top:1512.0px;width:86.0px;height:59.0px;background:#cfcfcf;box-shadow:inset 0 0 0 2.5px #555;"></div>
<div class="t" style="left:1550.50px;top:1528.59px;font-size:24.70px;line-height:24.70px;font-weight:bold;color:#151515;letter-spacing:0.215px;transform:scaleX(1.0300);transform-origin:0 0;">GND</div>
<div class="a" style="left:1629.5px;top:1512.0px;width:86.0px;height:59.0px;background:#cfcfcf;box-shadow:inset 0 0 0 2.5px #555;"></div>
<div class="t" style="left:1653.50px;top:1528.59px;font-size:24.70px;line-height:24.70px;font-weight:bold;color:#151515;letter-spacing:-0.159px;transform:scaleX(1.0300);transform-origin:0 0;">AC</div>
<div class="a" style="left:1722.5px;top:1512.0px;width:86.0px;height:59.0px;background:#62999a;"></div>
<div class="t" style="left:1745.21px;top:1528.59px;font-size:24.70px;line-height:24.70px;font-weight:bold;color:#e4f6f6;letter-spacing:0.999px;transform:scaleX(1.0300);transform-origin:0 0;">DC</div>
<svg class="a" style="left:0.0px;top:0.0px;pointer-events:none;" width="2277" height="1729" viewBox="0 0 2277 1729"><polygon points="1870.0,614.5 1870.0,641.5 1854.0,628" fill="#000"/><polygon points="1922.0,614.5 1922.0,641.5 1938.0,628" fill="#000"/><polygon points="2015.0,614.5 2015.0,641.5 1999.0,628" fill="#000"/><polygon points="2067.0,614.5 2067.0,641.5 2083.0,628" fill="#000"/><polygon points="1869.0,768.5 1869.0,795.5 1854.0,782" fill="#b8b8b8"/><polygon points="2066.0,768.5 2066.0,795.5 2081.0,782" fill="#b8b8b8"/><polygon points="1869.5,872.5 1869.5,899.5 1853.5,886" fill="#000"/><polygon points="2065.5,872.5 2065.5,899.5 2081.5,886" fill="#000"/><polygon points="1847.0,1139.5 1877.0,1139.5 1862,1124.5" fill="#000"/><polygon points="2060.0,1123.5 2088.0,1123.5 2074,1137.5" fill="#b0b0b0"/><polygon points="1847.0,1242.5 1877.0,1242.5 1862,1227.5" fill="#000"/><polygon points="2059.0,1226.5 2089.0,1226.5 2074,1241.5" fill="#000"/><polygon points="1847.0,1345.0 1877.0,1345.0 1862,1330.0" fill="#000"/><polygon points="2059.0,1329.0 2089.0,1329.0 2074,1344.0" fill="#000"/><polygon points="1256.0,1241.0 1286.0,1241.0 1271,1226.0" fill="#000"/><polygon points="1469.0,1225.0 1497.0,1225.0 1483,1239.0" fill="#b0b0b0"/><polygon points="1256.0,1344.0 1286.0,1344.0 1271,1329.0" fill="#000"/><polygon points="1468.0,1328.5 1498.0,1328.5 1483,1343.5" fill="#000"/><polygon points="1256.0,1447.0 1286.0,1447.0 1271,1432.0" fill="#000"/><polygon points="1468.0,1431.5 1498.0,1431.5 1483,1446.5" fill="#000"/><polygon points="1551.5,1241.0 1581.5,1241.0 1566.5,1226.0" fill="#000"/><polygon points="1763.5,1224.5 1793.5,1224.5 1778.5,1239.5" fill="#000"/><polygon points="1551.5,1344.0 1581.5,1344.0 1566.5,1329.0" fill="#000"/><polygon points="1763.5,1328.5 1793.5,1328.5 1778.5,1343.5" fill="#000"/><polygon points="1551.5,1447.0 1581.5,1447.0 1566.5,1432.0" fill="#000"/><polygon points="1763.5,1431.5 1793.5,1431.5 1778.5,1446.5" fill="#000"/></svg>
<div class="a" style="left:219.0px;top:1597.0px;width:257.0px;height:84.0px;background:#cfcfcf;"></div>
<div class="a" style="left:490.0px;top:1597.0px;width:257.0px;height:84.0px;background:#cfcfcf;"></div>
<div class="a" style="left:1846.0px;top:1597.5px;width:255.5px;height:83.5px;background:#cfcfcf;"></div>
<div class="t" style="left:255.57px;top:1626.72px;font-size:27.50px;line-height:27.50px;font-weight:bold;color:#1a1a1a;letter-spacing:0.729px;">Save settings</div>
<div class="t" style="left:574.28px;top:1607.72px;font-size:27.50px;line-height:27.50px;font-weight:bold;color:#1a1a1a;letter-spacing:1.131px;">Load /</div>
<div class="t" style="left:536.14px;top:1643.72px;font-size:27.50px;line-height:27.50px;font-weight:bold;color:#1a1a1a;letter-spacing:-0.703px;">delete setting</div>
<div class="t" style="left:1877.74px;top:1608.32px;font-size:27.50px;line-height:27.50px;font-weight:bold;color:#1a1a1a;letter-spacing:-0.898px;">Quit measuring</div>
<div class="t" style="left:1919.14px;top:1643.72px;font-size:27.50px;line-height:27.50px;font-weight:bold;color:#1a1a1a;letter-spacing:1.344px;">devices</div>
</div></body></html>
